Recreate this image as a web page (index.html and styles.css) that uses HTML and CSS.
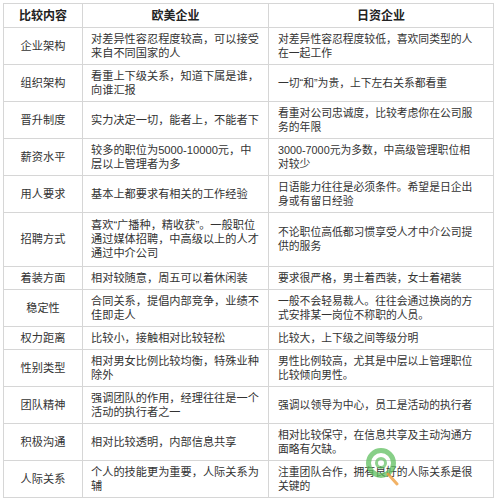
FILE: index.html
```html
<!DOCTYPE html>
<html lang="zh-CN">
<head>
<meta charset="utf-8">
<title>欧美企业与日资企业比较</title>
<link rel="stylesheet" href="styles.css">
</head>
<body>
<div class="wrap">
<table class="cmp">
  <colgroup>
    <col class="c1"><col class="c2"><col class="c3">
  </colgroup>
  <thead>
    <tr><th>比较内容</th><th>欧美企业</th><th>日资企业</th></tr>
  </thead>
  <tbody>
    <tr><td class="k">企业架构</td><td class="w">对差异性容忍程度较高，可以接受来自不同国家的人</td><td class="j">对差异性容忍程度较低，喜欢同类型的人在一起工作</td></tr>
    <tr><td class="k">组织架构</td><td class="w">看重上下级关系，知道下属是谁，向谁汇报</td><td class="j">一切“和”为贵，上下左右关系都看重</td></tr>
    <tr><td class="k">晋升制度</td><td class="w">实力决定一切，能者上，不能者下</td><td class="j">看重对公司忠诚度，比较考虑你在公司服务的年限</td></tr>
    <tr><td class="k">薪资水平</td><td class="w">较多的职位为5000-10000元，中层以上管理者为多</td><td class="j">3000-7000元为多数，中高级管理职位相对较少</td></tr>
    <tr><td class="k">用人要求</td><td class="w">基本上都要求有相关的工作经验</td><td class="j">日语能力往往是必须条件。希望是日企出身或有留日经验</td></tr>
    <tr class="tall"><td class="k">招聘方式</td><td class="w">喜欢“广播种，精收获”。一般职位通过媒体招聘，中高级以上的人才通过中介公司</td><td class="j">不论职位高低都习惯享受人才中介公司提供的服务</td></tr>
    <tr><td class="k">着装方面</td><td class="w">相对较随意，周五可以着休闲装</td><td class="j">要求很严格，男士着西装，女士着裙装</td></tr>
    <tr><td class="k">稳定性</td><td class="w">合同关系，提倡内部竞争，业绩不佳即走人</td><td class="j">一般不会轻易裁人。往往会通过换岗的方式安排某一岗位不称职的人员。</td></tr>
    <tr><td class="k">权力距离</td><td class="w">比较小，接触相对比较轻松</td><td class="j">比较大，上下级之间等级分明</td></tr>
    <tr><td class="k">性别类型</td><td class="w">相对男女比例比较均衡，特殊业种除外</td><td class="j">男性比例较高，尤其是中层以上管理职位比较倾向男性。</td></tr>
    <tr><td class="k">团队精神</td><td class="w">强调团队的作用，经理往往是一个活动的执行者之一</td><td class="j">强调以领导为中心，员工是活动的执行者</td></tr>
    <tr><td class="k">积极沟通</td><td class="w">相对比较透明，内部信息共享</td><td class="j">相对比较保守，在信息共享及主动沟通方面略有欠缺。</td></tr>
    <tr><td class="k">人际关系</td><td class="w">个人的技能更为重要，人际关系为辅</td><td class="j">注重团队合作，拥有良好的人际关系是很关键的</td></tr>
  </tbody>
</table>
<svg class="mark" width="40" height="44" viewBox="0 0 40 44" aria-hidden="true">
  <circle cx="17" cy="17" r="12.5" fill="none" stroke="#5fbf5f" stroke-width="5" opacity="0.75"/>
  <circle cx="17" cy="17" r="4.5" fill="none" stroke="#5fbf5f" stroke-width="3" opacity="0.7"/>
  <line x1="24" y1="28" x2="33" y2="38" stroke="#f0a040" stroke-width="3" stroke-linecap="round" opacity="0.8"/>
</svg>
</div>
</body>
</html>
```
FILE: styles.css
```css
html, body {
  margin: 0;
  padding: 0;
  background: #ffffff;
}
.wrap {
  position: relative;
  padding: 3px 0 0 3px;
}
.cmp {
  border-collapse: collapse;
  table-layout: fixed;
  width: 490px;
  font-family: "Liberation Sans", "Noto Sans CJK SC", sans-serif;
  color: #333333;
  border: 1px solid #d0d0d0;
}
.c1 { width: 79px; }
.c2 { width: 186px; }
.c3 { width: 225px; }
.cmp th, .cmp td {
  border: 1px solid #d6d6d6;
  vertical-align: middle;
  line-height: 14px;
}
.cmp th {
  font-size: 12px;
  font-weight: bold;
  color: #222222;
  text-align: center;
  padding: 5px 0 4px;
}
.cmp td {
  padding: 4px 0;
}
.cmp td.k {
  font-size: 11.2px;
  text-align: center;
}
.cmp td.w {
  font-size: 11.2px;
  text-align: left;
  padding-left: 8px;
  padding-right: 7px;
}
.cmp td.j {
  font-size: 10.8px;
  text-align: left;
  padding-left: 9px;
  padding-right: 17px;
}
.cmp tr.tall td {
  padding-top: 5px;
  padding-bottom: 6px;
}
.mark {
  position: absolute;
  left: 364px;
  top: 446px;
}
```
